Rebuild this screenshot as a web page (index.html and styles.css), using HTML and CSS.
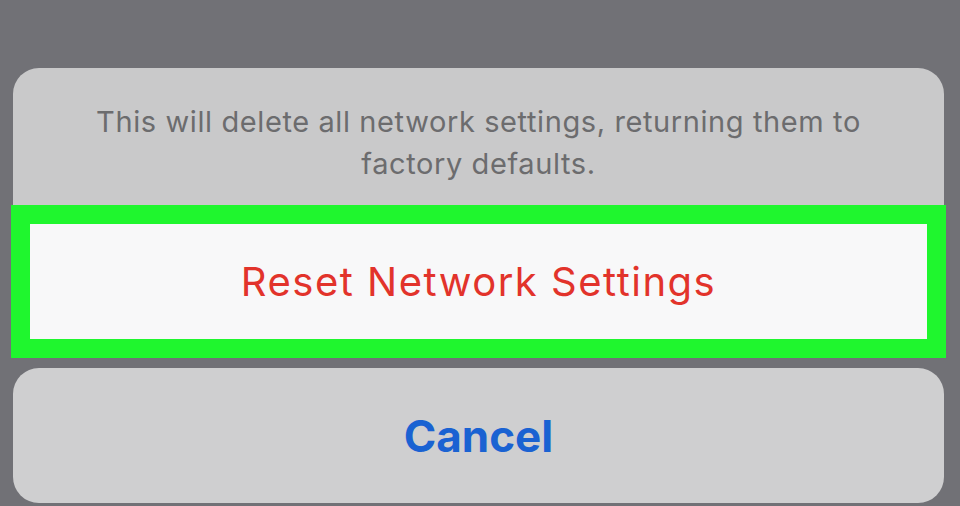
FILE: index.html
```html
<!DOCTYPE html>
<html lang="en">
<head>
    <meta charset="UTF-8">
    <meta name="viewport" content="width=device-width, initial-scale=1.0">
    <title>Reset Network Settings</title>
    <link rel="stylesheet" href="styles.css">
</head>
<body>
    <div class="sheet">
        <div class="group">
            <p class="message">This will delete all network settings, returning them to<br>factory defaults.</p>
            <button class="action destructive highlighted">Reset Network Settings</button>
        </div>
        <button class="cancel">Cancel</button>
    </div>
</body>
</html>
```

FILE: styles.css
```css
body {
    margin: 0;
    background-color: #717176;
    font-family: Inter, "Noto Sans", sans-serif;
}

.sheet {
    display: flex;
    flex-direction: column;
    padding: 68px 16px 0 13px;
    gap: 10px;
}

.group {
    background-color: #c9c9ca;
    border-radius: 26px 26px 0 0;
    display: flex;
    flex-direction: column;
}

.message {
    margin: 0;
    height: 137px;
    box-sizing: border-box;
    padding-top: 33px;
    text-align: center;
    font-size: 29px;
    letter-spacing: 0.6px;
    line-height: 42px;
    color: #6c6c6e;
}

button {
    font-family: inherit;
    border: none;
    cursor: pointer;
}

.action {
    height: 153px;
    margin: 0 -2px;
    background-color: #f8f8f9;
    font-size: 40px;
    letter-spacing: 1.5px;
}

.destructive {
    color: #e2332b;
}

/* bright outline drawn round the button */
.highlighted {
    border: 19px solid #1ff62e;
}

.cancel {
    height: 135px;
    background-color: #cfcfd0;
    border-radius: 26px;
    font-size: 44px;
    font-weight: 700;
    color: #1a62d2;
}
```
